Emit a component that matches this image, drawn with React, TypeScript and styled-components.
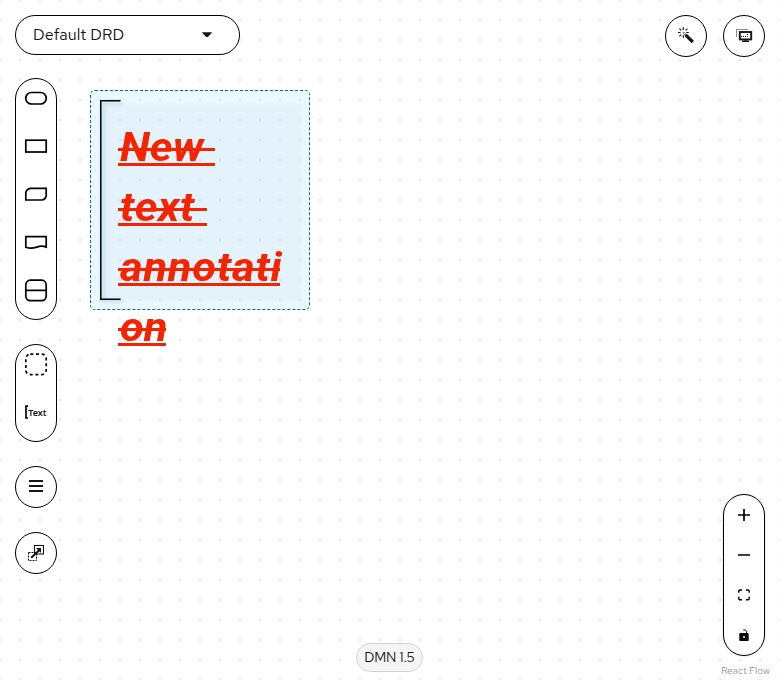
import React from "react";
import styled, { createGlobalStyle } from "styled-components";

const GlobalStyle = createGlobalStyle`
  * { box-sizing: border-box; }
  html, body { margin: 0; height: 100%; overflow: hidden; }
  body { font-family: "Red Hat Text", "Noto Sans", sans-serif; color: #151515; background: #fff; }
`;

const Editor = styled.main`
  position: relative;
  width: 780px;
  height: 680px;
  padding: 15px 15px 0;
  display: flex;
  flex-direction: column;
  overflow: hidden;
  background: radial-gradient(circle at 1px 1px, #e5e5e5 1.1px, transparent 1.2px) -1px -1px / 20px 20px #fff;
`;

const TopBar = styled.header`
  display: flex;
  justify-content: space-between;
  align-items: flex-start;
  height: 63px;
`;

const Actions = styled.div`
  display: flex;
  gap: 16px;
`;

const DrdSelector = styled.button`
  display: flex;
  align-items: center;
  justify-content: space-between;
  width: 225px;
  height: 40px;
  padding: 0 26px 1px 17px;
  border: 1px solid #000;
  border-radius: 20px;
  background: #fff;
  color: #151515;
  font: 400 16px/24px "Red Hat Text", "Noto Sans", sans-serif;
  letter-spacing: 0.1px;
`;

const RoundButton = styled.button`
  display: flex;
  align-items: center;
  justify-content: center;
  width: 42px;
  height: 42px;
  padding: 0;
  border: 1px solid #000;
  border-radius: 50%;
  background: #fff;
  color: #151515;
`;

const Workspace = styled.div`
  display: flex;
  justify-content: space-between;
  height: 602px;
`;

const Palette = styled.aside`
  display: flex;
  flex-direction: column;
  gap: 24px;
`;

const Pill = styled.div<{ $height: number; $raised?: boolean }>`
  display: flex;
  flex-direction: column;
  align-items: center;
  width: 42px;
  height: ${(p) => p.$height}px;
  border: 1px solid #000;
  border-radius: 21px;
  background: #fff;
  overflow: hidden;
  box-shadow: ${(p) => (p.$raised ? "0 0 2px 1px rgba(0, 0, 0, 0.08)" : "none")};
`;

const Tool = styled.button<{ $height: number }>`
  display: flex;
  align-items: center;
  justify-content: center;
  flex: none;
  width: 40px;
  height: ${(p) => p.$height}px;
  padding: 0;
  border: 0;
  background: none;
  color: #151515;
`;

const RightColumn = styled.div`
  display: flex;
  flex-direction: column;
  align-items: flex-end;
  justify-content: flex-end;
  width: 62px;
`;

const Attribution = styled.span`
  height: 24px;
  margin-right: -5px;
  padding-top: 8px;
  color: #999;
  font-size: 10px;
  line-height: 14px;
  white-space: nowrap;
`;

const VersionPanel = styled.div`
  display: flex;
  align-items: flex-end;
  padding: 0 0 8px 19px;
`;

const Version = styled.span`
  width: 67px;
  height: 29px;
  border: 1px solid #d2d2d2;
  border-radius: 15px;
  background: #f5f5f5;
  font-size: 14px;
  line-height: 27px;
  text-align: center;
  white-space: nowrap;
  letter-spacing: -0.2px;
`;

/* Items on the free canvas */
const AnnotationNode = styled.div`
  position: absolute;
  left: 100px;
  top: 100px;
  width: 200px;
  height: 200px;
`;

const Bracket = styled.svg`
  display: block;
  width: 200px;
  height: 200px;
  overflow: visible;
  filter: drop-shadow(2px 2px 2px rgba(0, 107, 164, 0.35));
`;

const AnnotationText = styled.div`
  position: absolute;
  left: 18px;
  top: 17px;
  color: #f52300;
  font: italic 700 41px/60px Roboto, sans-serif;
`;

/* A text line whose strike and underline span $width */
const TextLine = styled.div<{ $width: number; $spacing: number }>`
  width: ${(p) => p.$width}px;
  height: 60px;
  padding-left: 2px;
  letter-spacing: ${(p) => p.$spacing}px;
  white-space: pre;
  background:
    linear-gradient(#f52300, #f52300) 0 31px / 100% 3px no-repeat,
    linear-gradient(#f52300, #f52300) 0 46px / 100% 3px no-repeat;

  > span {
    display: inline-block;
    transform: scaleX(1.06);
    transform-origin: 0 0;
  }
`;

const Selection = styled.div`
  position: absolute;
  left: 90px;
  top: 90px;
  width: 220px;
  height: 220px;
  border: 1px dashed #006ba4;
  border-radius: 5px;
  background: rgba(0, 169, 255, 0.08);
`;

const NodeFill = styled.div`
  position: absolute;
  left: 2px;
  top: 4px;
  width: 200px;
  height: 197px;
  background: rgba(190, 205, 225, 0.14);
  filter: blur(1px);
`;

function Icon({ w, h = w, children }: { w: number; h?: number; children: React.ReactNode }) {
  return (
    <svg width={w} height={h} viewBox={`0 0 ${w} ${h}`} fill="none" stroke="#000" strokeWidth="1.7">
      {children}
    </svg>
  );
}

const WandIcon = () => (
  <Icon w={18}>
    <path d="M8.6 7.8 L15.8 15" stroke="#151515" strokeWidth="3.2" />
    <path d="M5.8 6 L8 8.2 L9 7.2 L6.8 5 Z" stroke="#151515" strokeWidth=".6" />
    <path d="M6.3 .3v2.6M1 5.5h2.6M9.2 5.5h2.6M6.3 8.3v2.4M2.4 1.6l1.8 1.8M10.4 1.6L8.6 3.4M2.4 9.4l1.8-1.8" stroke="#151515" strokeWidth="1.2" />
  </Icon>
);

const ScreenIcon = () => (
  <Icon w={18}>
    <path d="M1.5 9.5V2.5H13" stroke="#151515" strokeWidth="1" strokeDasharray="1 1" />
    <rect x="4.8" y="5" width="11.4" height="7.4" stroke="#151515" strokeWidth="1.9" />
    <path d="M6 9.5h6.5V6" stroke="#151515" strokeWidth="1" strokeDasharray="1 1" />
    <path d="M10.5 12.5v2M7 14.2h7" stroke="#151515" strokeWidth="1.6" />
  </Icon>
);

export default function App() {
  return (
    <Editor>
      <GlobalStyle />
      <TopBar>
        <DrdSelector>
          Default DRD
          <svg width="12" height="8" viewBox="0 0 12 8">
            <path d="M1.5 1.3h9q.8 0 .2.8L7 5.8q-1 .8-2 0L1.3 2.1q-.6-.8.2-.8Z" fill="#151515" />
          </svg>
        </DrdSelector>
        <Actions>
          <RoundButton aria-label="Autolayout"><WandIcon /></RoundButton>
          <RoundButton aria-label="Fit"><ScreenIcon /></RoundButton>
        </Actions>
      </TopBar>

      <Workspace>
        <Palette>
          <Pill $height={242}>
            <Tool $height={38}><Icon w={24}><rect x="1.8" y="6.5" width="20.4" height="11.5" rx="5.6" /></Icon></Tool>
            <Tool $height={58}><Icon w={24}><rect x="1.8" y="6.2" width="20.4" height="11.8" /></Icon></Tool>
            <Tool $height={38}><Icon w={24}><path d="M6.3 6.3H22.2v7.5q-.5 3.5-4 4.2H1.8v-7.5q.6-3.3 4.5-4.2Z" /></Icon></Tool>
            <Tool $height={58}><Icon w={24}><path d="M1.8 17.3V6.7h20.4v10.4c-4-1.6-6-1.2-9.5 0-3.5 1.3-7 1.6-10.9.2Z" /></Icon></Tool>
            <Tool $height={38}><Icon w={24}><rect x="1.8" y="2.2" width="20.4" height="20.4" rx="4.5" /><path d="M1.8 12.4h20.4" /></Icon></Tool>
          </Pill>
          <Pill $height={98}>
            <Tool $height={38}><Icon w={24}><rect x="1.8" y="2.2" width="20.4" height="20.4" rx="4.5" strokeDasharray="3 2.7" /></Icon></Tool>
            <Tool $height={58}>
              <Icon w={24}>
                <path d="M4 6.2H2V18H4" />
                <text x="4.2" y="16" fill="#151515" stroke="none" fontFamily="Noto Sans" fontWeight="600" fontSize="9">Text</text>
              </Icon>
            </Tool>
          </Pill>
          <RoundButton aria-label="Nodes">
            <Icon w={14}><path d="M0 1h14M0 6h14M0 11h14" stroke="#151515" strokeWidth="2.2" /></Icon>
          </RoundButton>
          <RoundButton aria-label="External nodes">
            <Icon w={18}>
              <rect x="7.5" y="1.5" width="9" height="8.5" stroke="#151515" strokeWidth="1.1" />
              <rect x="1.5" y="8.5" width="8" height="8" stroke="#151515" strokeWidth="1" strokeDasharray="2 1" />
              <path d="M4.2 13.7l8.5-8" stroke="#151515" strokeWidth="2.1" />
              <path d="M9 4h5v5Z" fill="#151515" stroke="none" />
            </Icon>
          </RoundButton>
        </Palette>

        <VersionPanel><Version>DMN 1.5</Version></VersionPanel>

        <RightColumn>
          <Pill $height={162} $raised>
            <Tool $height={40}><Icon w={12}><path d="M6 0v12M0 6h12" /></Icon></Tool>
            <Tool $height={40}><Icon w={12}><path d="M0 6h12" /></Icon></Tool>
            <Tool $height={40}><Icon w={12}><path d="M.8 3.7V2.2q0-1.2 1.2-1.2h2M8 1h2q1.2 0 1.2 1.2v1.5M11.2 7.8v1.7q0 1.2-1.2 1.2H8M4 10.7H2Q.8 10.7.8 9.5V7.8" strokeWidth="1.4" /></Icon></Tool>
            <Tool $height={40}>
              <Icon w={12}>
                <rect x="1.3" y="4" width="9.4" height="8" rx="1" fill="#000" stroke="none" />
                <path d="M5.2 1Q7.8.2 8.6 2.3V4" strokeWidth="1" />
                <circle cx="6" cy="8" r="1" fill="#fff" stroke="none" />
              </Icon>
            </Tool>
          </Pill>
          <Attribution>React Flow</Attribution>
        </RightColumn>
      </Workspace>

      <Selection />
      <AnnotationNode>
        <NodeFill />
        <Bracket viewBox="0 0 200 200">
          <path d="M20.5 .7H.8V199.3H20.5" fill="none" stroke="#000" strokeWidth="1.5" />
        </Bracket>
        <AnnotationText>
          <TextLine $width={97} $spacing={0.1}><span>New </span></TextLine>
          <TextLine $width={89} $spacing={0.5}><span>text </span></TextLine>
          <TextLine $width={162} $spacing={0.8}><span>annotati</span></TextLine>
          <TextLine $width={48} $spacing={0}><span>on</span></TextLine>
        </AnnotationText>
      </AnnotationNode>
    </Editor>
  );
}
